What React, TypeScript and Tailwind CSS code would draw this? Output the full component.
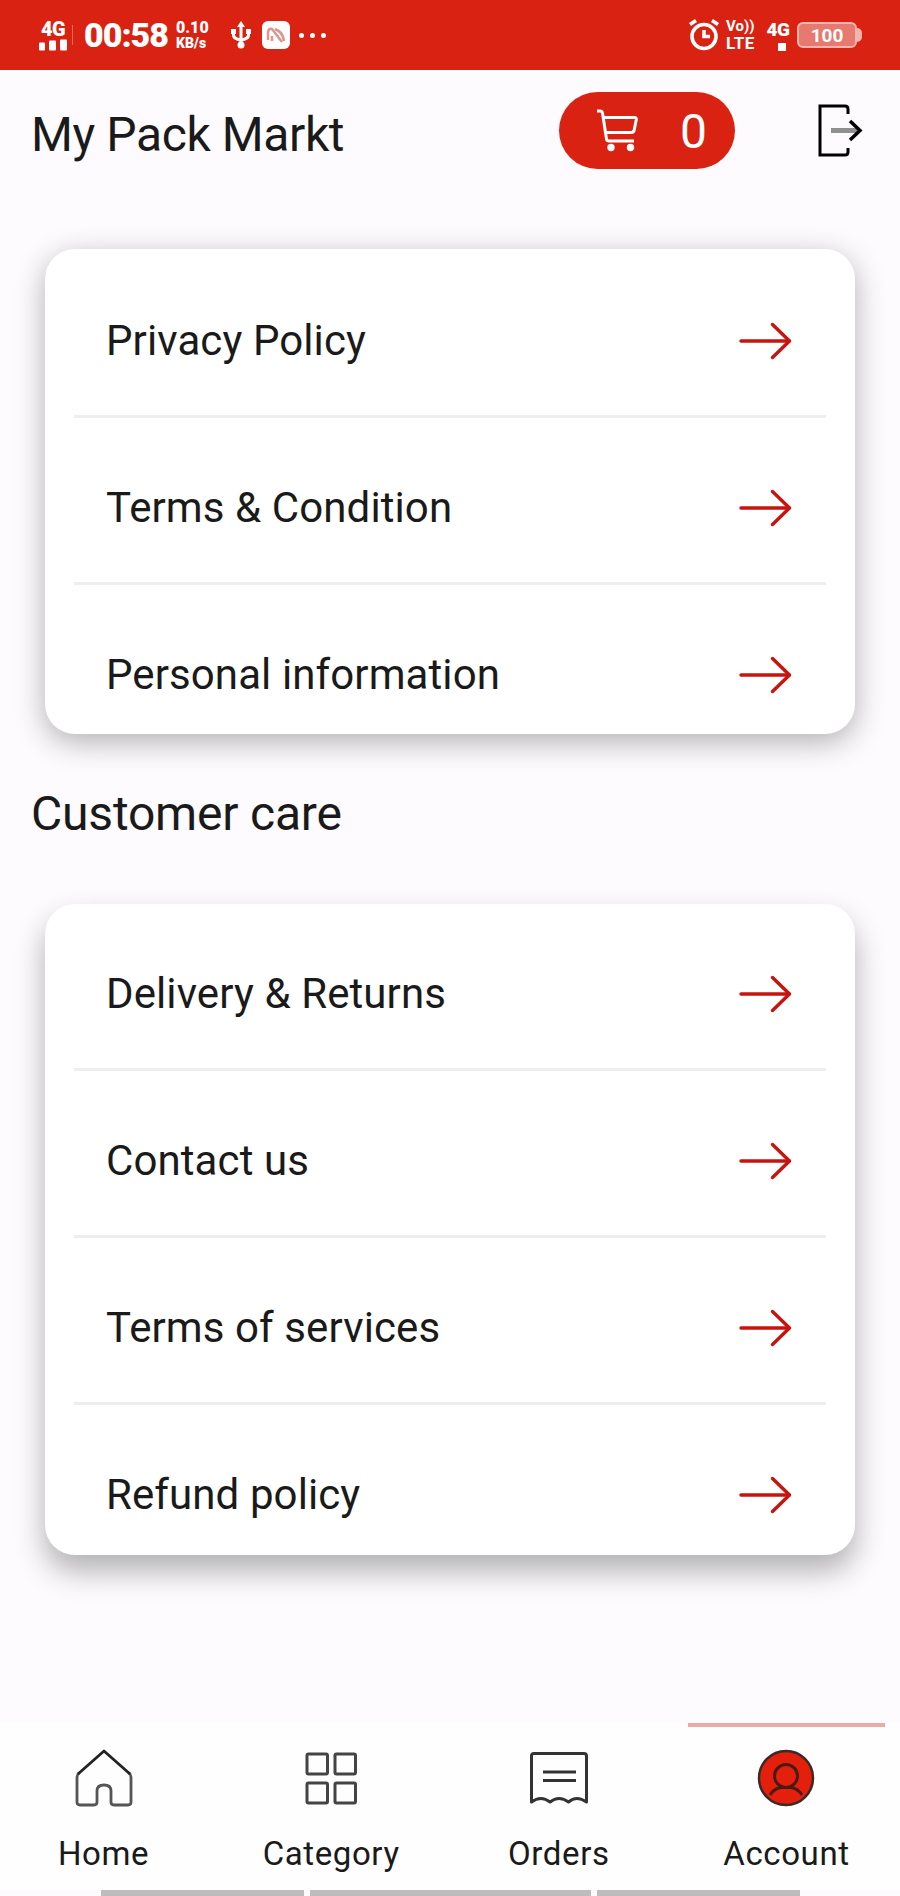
import type { ReactNode, SVGProps } from "react";

const accountLinks = ["Privacy Policy", "Terms & Condition", "Personal information"];
const careLinks = ["Delivery & Returns", "Contact us", "Terms of services", "Refund policy"];

function SignalIcon(props: SVGProps<SVGSVGElement>) {
    return (
        <svg viewBox="0 0 28 11" fill="currentColor" aria-hidden="true" {...props}>
            <rect x="0" y="3" width="6" height="8" rx="1" />
            <rect x="10" y="1" width="7" height="10" rx="1" />
            <rect x="21" y="0" width="7" height="11" rx="1" />
        </svg>
    );
}

function UsbIcon(props: SVGProps<SVGSVGElement>) {
    return (
        <svg viewBox="0 0 22 28" fill="none" stroke="currentColor" strokeWidth="3" aria-hidden="true" {...props}>
            <path d="M11 3v22M3.500 10v4q0 3 3.500 4l4 1.500 4-1.500q3.500-1 3.500-4v-4" />
            <path d="M7 6 11 0l4 6z" fill="currentColor" stroke="none" />
            <circle cx="11" cy="24" r="3.500" fill="currentColor" stroke="none" />
            <rect x="1" y="8" width="5" height="5" fill="currentColor" stroke="none" />
            <rect x="16" y="8" width="5" height="5" fill="currentColor" stroke="none" />
        </svg>
    );
}

function NoticeIcon(props: SVGProps<SVGSVGElement>) {
    return (
        <svg viewBox="0 0 28 28" fill="none" aria-hidden="true" {...props}>
            <rect width="28" height="28" rx="6" fill="#fff" />
            <path d="M6 19v-7q0-5 4-4l10 13M10 20v-5M13 8q8 3 9 12" stroke="#e2938c" strokeWidth="2.500" />
        </svg>
    );
}

function AlarmIcon(props: SVGProps<SVGSVGElement>) {
    return (
        <svg viewBox="0 0 30 32" fill="none" stroke="currentColor" strokeWidth="3.600" aria-hidden="true" {...props}>
            <circle cx="15" cy="17.500" r="12" />
            <path d="M15 11v6.500h6M1 5.500l6-4M29 5.500l-6-4" />
        </svg>
    );
}

function CartIcon(props: SVGProps<SVGSVGElement>) {
    return (
        <svg viewBox="0 0 42 44" fill="none" stroke="currentColor" strokeWidth="3" strokeLinejoin="round" aria-hidden="true" {...props}>
            <path d="M0 3h3q2 0 2.500 2l4 26q.4 2 2.500 2h25" />
            <path d="M6 9.500h31.500q2 0 1.800 2l-2 10q-.4 3-3 3H9" />
            <circle cx="14" cy="39.500" r="3.700" fill="currentColor" stroke="none" />
            <circle cx="33.500" cy="39.500" r="3.700" fill="currentColor" stroke="none" />
        </svg>
    );
}

function LogoutIcon(props: SVGProps<SVGSVGElement>) {
    return (
        <svg viewBox="0 0 46 54" fill="none" stroke="currentColor" strokeWidth="3" aria-hidden="true" {...props}>
            <path d="M31 11V6q0-3-3-3H3v49h25q3 0 3-3v-4" />
            <path d="M14 27.500h27" stroke="#909090" strokeWidth="5" />
            <path d="m33 18 10 9.500L33 37" strokeWidth="3.500" />
        </svg>
    );
}

function ArrowIcon(props: SVGProps<SVGSVGElement>) {
    return (
        <svg viewBox="0 0 54 38" fill="none" stroke="currentColor" strokeWidth="3.400" strokeLinecap="round" strokeLinejoin="round" aria-hidden="true" {...props}>
            <path d="M3 19h48" />
            <path d="m34.500 2.500 17 16.500-17 16.500" />
        </svg>
    );
}

function HomeIcon(props: SVGProps<SVGSVGElement>) {
    return (
        <svg viewBox="0 0 58 60" fill="none" stroke="#555" strokeWidth="2.800" strokeLinejoin="round" aria-hidden="true" {...props}>
            <path d="M4 25q-2 2-2 4v25q0 3 3 3h14q3 0 3-3V43q0-6 7-6t7 6v11q0 3 3 3h14q3 0 3-3V29q0-2-2-4" />
            <path d="M3 26 29 3l26 23" stroke="#222" />
        </svg>
    );
}

function CategoryIcon(props: SVGProps<SVGSVGElement>) {
    return (
        <svg viewBox="0 0 58 60" fill="none" stroke="#444" strokeWidth="3" aria-hidden="true" {...props}>
            <rect x="5" y="6" width="20.500" height="20" rx="1.500" />
            <rect x="33" y="6" width="20.500" height="20" rx="1.500" />
            <rect x="5" y="35" width="20.500" height="20" rx="1.500" />
            <rect x="33" y="35" width="20.500" height="20" rx="1.500" />
        </svg>
    );
}

function OrdersIcon(props: SVGProps<SVGSVGElement>) {
    return (
        <svg viewBox="0 0 60 60" fill="none" stroke="#333" strokeWidth="3" strokeLinejoin="round" aria-hidden="true" {...props}>
            <path d="M2.500 54V8q0-2.500 2.500-2.500h50q2.500 0 2.500 2.500v46q-10-7-18 0-9.500-7-18.500 0-9-7-18.500 0z" />
            <path d="M14 24h33M14 32.500h33" />
        </svg>
    );
}

function AccountIcon(props: SVGProps<SVGSVGElement>) {
    return (
        <svg viewBox="0 0 58 60" fill="none" stroke="#4a1a12" strokeWidth="3" aria-hidden="true" {...props}>
            <circle cx="29" cy="30" r="27" fill="#e4200d" stroke="#3a2a28" strokeWidth="2.500" />
            <circle cx="29" cy="28" r="11.500" />
            <path d="M13 47q4-6.500 11-7.500h10q7 1 11 7.500" />
        </svg>
    );
}

function StatusBar() {
    return (
        <div className="flex h-[70px] items-center bg-[#d92211] pl-[39px] pr-[38px] text-white">
            <div className="flex w-[28px] flex-col items-center">
                <span className="text-[20px] font-black leading-[19px] tracking-[-0.5px]">4G</span>
                <SignalIcon className="h-[12px] w-[28px]" />
            </div>
            <span className="ml-[5px] h-5 w-px bg-[#e2695d]" />
            <span className="ml-[11px] w-[86px] text-[34px] font-black leading-none tracking-[-1px]">00:58</span>
            <div className="ml-[6px] flex w-[38px] flex-col whitespace-nowrap font-black">
                <span className="text-[16px] leading-[17px]">0.10</span>
                <span className="text-[14px] leading-[15px]">KB/s</span>
            </div>
            <UsbIcon className="ml-[16px] h-[28px] w-[22px]" />
            <NoticeIcon className="ml-[10px] h-[28px] w-[28px]" />
            <div className="ml-[9px] flex gap-[6px]">
                <span className="size-[5px] rounded-full bg-white" />
                <span className="size-[5px] rounded-full bg-white" />
                <span className="size-[5px] rounded-full bg-white" />
            </div>
            <AlarmIcon className="ml-auto h-[32px] w-[30px]" />
            <div className="ml-[7px] flex w-[34px] flex-col whitespace-nowrap font-bold">
                <span className="text-[15px] leading-[16px]">Vo))</span>
                <span className="text-[17px] leading-[18px] tracking-[0.4px]">LTE</span>
            </div>
            <div className="ml-[6px] flex w-[24px] flex-col items-center">
                <span className="text-[19px] font-black leading-[20px] tracking-[-0.5px]">4G</span>
                <span className="ml-[8px] mt-[3px] size-[8px] bg-white" />
            </div>
            <div className="ml-[7px] flex items-center">
                <span className="flex h-[26px] w-[60px] items-center justify-center rounded-[6px] border-2 border-[#f2b5b0] bg-[#e67a70] text-[19px] font-bold leading-none">
                    100
                </span>
                <span className="h-[14px] w-[5px] rounded-r-full bg-[#f2b5b0]" />
            </div>
        </div>
    );
}

function LinkCard({ links, className }: { links: string[]; className: string }) {
    return (
        <ul className={`mx-[45px] overflow-hidden rounded-[30px] bg-white px-[29px] ${className}`}>
            {links.map((link) => (
                <li key={link} className="flex h-[167px] items-center justify-between border-b-3 border-[#eeeeee] pl-[32px] pr-[34px] pt-[16px] last:border-transparent">
                    <span className="text-[42px] leading-none tracking-[0.1px] text-[#1a1a1a]">{link}</span>
                    <ArrowIcon className="h-[38px] w-[54px] text-[#c8140f]" />
                </li>
            ))}
        </ul>
    );
}

function NavItem({ label, active, children }: { label: string; active?: boolean; children: ReactNode }) {
    return (
        <a href="#" className="flex w-[197px] flex-col items-center text-[#1a1a1a]">
            <span className={active ? "h-[4px] w-full bg-[#eda9a7]" : "h-[4px] w-full"} />
            <span className="mt-[21px] h-[60px]">{children}</span>
            <span className="mt-[27px] text-[33px] leading-[38px] tracking-[0.6px]">{label}</span>
        </a>
    );
}

export default function App() {
    return (
        <div className="flex h-[1896px] w-[900px] flex-col overflow-hidden bg-[#fdfbfe] font-['Roboto',sans-serif]">
            <StatusBar />

            <header className="flex h-[120px] items-center pl-[31px] pr-[37px]">
                <h1 className="pt-[9px] text-[48px] leading-none tracking-[-0.4px] text-[#1a1a1a]">My Pack Markt</h1>
                <button className="ml-auto flex h-[77px] w-[176px] items-center rounded-full bg-[#d92211] pl-[38px] text-white">
                    <CartIcon className="h-[44px] w-[42px]" />
                    <span className="ml-[41px] pt-[4px] text-[48px] leading-none">0</span>
                </button>
                <LogoutIcon className="ml-[82px] h-[54px] w-[46px] text-black" />
            </header>

            <main className="flex-1">
                <LinkCard links={accountLinks} className="mt-[59px] h-[485px] pt-[2px] shadow-[0_8px_30px_rgba(0,0,0,0.3)]" />
                <h2 className="mt-[56px] pl-[31px] text-[48px] leading-none tracking-[-0.2px] text-[#1a1a1a]">Customer care</h2>
                <LinkCard links={careLinks} className="mt-[66px] h-[651px] shadow-[0_16px_30px_rgba(0,0,0,0.3)]" />
            </main>

            <nav className="flex h-[167px] shrink-0 justify-between bg-[#fefefe] pl-[5px] pr-[15px]">
                <NavItem label="Home">
                    <HomeIcon className="h-[60px] w-[58px]" />
                </NavItem>
                <NavItem label="Category">
                    <CategoryIcon className="h-[60px] w-[58px]" />
                </NavItem>
                <NavItem label="Orders">
                    <OrdersIcon className="h-[60px] w-[60px]" />
                </NavItem>
                <NavItem label="Account" active>
                    <AccountIcon className="h-[60px] w-[58px]" />
                </NavItem>
            </nav>

            {/* Top edge of the system navigation keys */}
            <div className="flex h-[6px] shrink-0 gap-[6px] bg-[#fdfbfe] pl-[101px]">
                <span className="w-[203px] bg-[#bfbcbe]" />
                <span className="w-[281px] bg-[#bfbcbe]" />
                <span className="w-[203px] bg-[#bfbcbe]" />
            </div>
        </div>
    );
}
